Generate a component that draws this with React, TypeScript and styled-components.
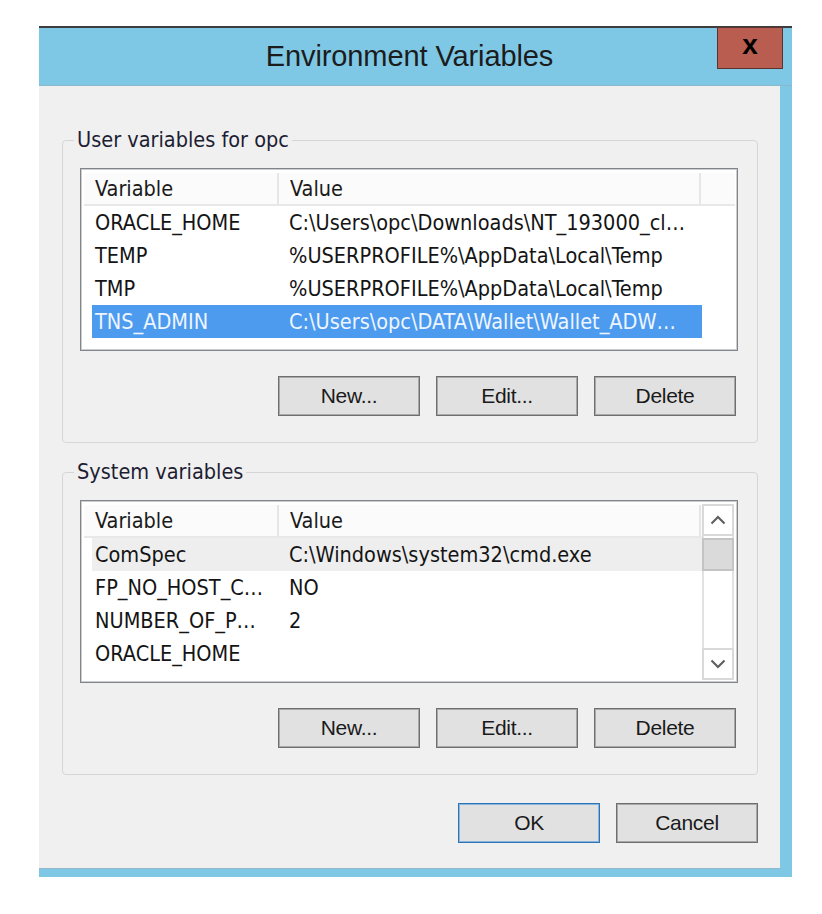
import React from "react";
import styled, { createGlobalStyle } from "styled-components";

const listFont = `"DejaVu Sans Condensed", "Liberation Sans", sans-serif`;
const uiFont = `"Liberation Sans", Arial, sans-serif`;

const Global = createGlobalStyle`
  html, body { margin: 0; padding: 0; background: #ffffff; }
  body { width: 822px; height: 914px; overflow: hidden; }
  * { box-sizing: border-box; }
`;

const Page = styled.div`
  padding: 26px 0 0 39px;
`;

const Window = styled.div`
  width: 753px;
  background: #7ec8e6;
  border-top: 2px solid #3d3d3d;
`;

const TitleBar = styled.div`
  position: relative;
  height: 58px;
  border-bottom: 1px solid #8cb8cc;
  display: flex;
  align-items: center;
  padding-right: 12px;
`;

const Title = styled.div`
  flex: 1;
  text-align: center;
  font-family: ${uiFont};
  font-size: 29px;
  color: #1c1c1c;
  letter-spacing: -0.1px;
`;

const CloseButton = styled.div`
  position: absolute;
  top: -1px;
  right: 9px;
  width: 66px;
  height: 42px;
  background: #b95d51;
  border: 1px solid #5a3530;
  display: flex;
  align-items: center;
  justify-content: center;
  font-family: ${uiFont};
  font-weight: bold;
  font-size: 28px;
  line-height: 1;
  color: #000;
  padding-bottom: 6px;
`;

const Frame = styled.div`
  padding: 0 12px 8px 0;
`;

const Body = styled.div`
  height: 783px;
  background: #f0f0f0;
  border-bottom: 1px solid #93b8ca;
  padding: 42px 22px 25px 23px;
  display: flex;
  flex-direction: column;
`;

const GroupBox = styled.fieldset`
  margin: 0;
  min-width: 0;
  padding: 16px 19px 26px 17px;
  border: 1px solid #d6d6d6;
  border-radius: 4px;
  & + & {
    margin-top: 17px;
  }
`;

const Legend = styled.legend`
  font-family: ${listFont};
  font-size: 21.5px;
  line-height: 24px;
  color: #1d1d33;
  padding: 0 3px;
  margin-left: -6px;
`;

const ListBox = styled.div`
  height: 183px;
  background: #ffffff;
  border: 1px solid #80848c;
  box-shadow: inset 0 0 0 1px #cdcdcd;
  padding: 3px 2px 2px 3px;
  display: grid;
  grid-template-columns: 1fr auto;
  overflow: hidden;
`;

const ListContent = styled.div`
  min-width: 0;
  overflow: hidden;
`;

const Header = styled.div`
  display: grid;
  grid-template-columns: 195px 422px 1fr;
  height: 33px;
  margin-top: 1px;
  border-bottom: 2px solid #e8e8e8;
  background: #fbfbfb;
`;

const HeaderCell = styled.div<{ $last?: boolean }>`
  font-family: ${listFont};
  font-size: 21.5px;
  line-height: 32px;
  color: #1a1a1a;
  padding-left: ${(p) => (p.$last ? 0 : 11)}px;
  border-right: ${(p) => (p.$last ? "none" : "2px solid #e6e6e6")};
  white-space: nowrap;
  overflow: hidden;
`;

const Row = styled.div<{ $state?: "selected" | "hot" }>`
  display: grid;
  grid-template-columns: 194px 1fr;
  height: 33px;
  width: 610px;
  margin-left: 8px;
  background: ${(p) =>
    p.$state === "selected" ? "#4c9bef" : p.$state === "hot" ? "#eeeeee" : "transparent"};
  color: ${(p) => (p.$state === "selected" ? "#eef5ff" : "#141414")};
`;

const Cell = styled.div`
  font-family: ${listFont};
  font-size: 21.5px;
  line-height: 32px;
  padding: 1px 0 0 3px;
  white-space: nowrap;
  overflow: hidden;
`;

const ScrollBar = styled.div`
  width: 32px;
  margin: 0 1px 0 0;
  display: flex;
  flex-direction: column;
  background: #ffffff;
  border-left: 2px solid #e2e2e2;
  border-right: 2px solid #e2e2e2;
`;

const ScrollArrow = styled.div`
  height: 32px;
  display: flex;
  align-items: center;
  justify-content: center;
  border: 2px solid #d9d9d9;
  margin: 0 -2px;
  background: #ffffff;
`;

const ScrollThumb = styled.div`
  height: 33px;
  margin: 2px -2px 0;
  background: #dadada;
  border: 2px solid #c4c4c4;
`;

const ScrollTrack = styled.div`
  flex: 1;
`;

const ButtonRow = styled.div<{ $top: number }>`
  display: flex;
  justify-content: flex-end;
  gap: 16px;
  margin-top: ${(p) => p.$top}px;
  padding-right: 2px;
`;

const Button = styled.div<{ $default?: boolean }>`
  width: 142px;
  height: 40px;
  display: flex;
  align-items: center;
  justify-content: center;
  font-family: ${uiFont};
  font-size: 21px;
  color: #1a1a1a;
  background: #e1e1e1;
  border: 1px solid ${(p) => (p.$default ? "#2f74b4" : "#6e6e6e")};
  box-shadow: inset 0 0 0 1px ${(p) => (p.$default ? "#86b4dc" : "#a9a9a9")};
  letter-spacing: -0.3px;
`;

const DialogButtons = styled(ButtonRow)`
  padding-right: 0;
`;

const Chevron = ({ dir }: { dir: "up" | "down" }) => (
  <svg width="16" height="10" viewBox="0 0 16 10">
    <polyline
      points={dir === "up" ? "1.5,8.5 8,2 14.5,8.5" : "1.5,1.5 8,8 14.5,1.5"}
      fill="none"
      stroke="#606060"
      strokeWidth="2.2"
    />
  </svg>
);

type Item = { name: string; value: string; state?: "selected" | "hot" };

const userVars: Item[] = [
  { name: "ORACLE_HOME", value: "C:\\Users\\opc\\Downloads\\NT_193000_cl…" },
  { name: "TEMP", value: "%USERPROFILE%\\AppData\\Local\\Temp" },
  { name: "TMP", value: "%USERPROFILE%\\AppData\\Local\\Temp" },
  { name: "TNS_ADMIN", value: "C:\\Users\\opc\\DATA\\Wallet\\Wallet_ADW…", state: "selected" },
];

const systemVars: Item[] = [
  { name: "ComSpec", value: "C:\\Windows\\system32\\cmd.exe", state: "hot" },
  { name: "FP_NO_HOST_C…", value: "NO" },
  { name: "NUMBER_OF_P…", value: "2" },
  { name: "ORACLE_HOME", value: "" },
];

const VarList = ({ items, scroll }: { items: Item[]; scroll?: boolean }) => (
  <ListBox>
    <ListContent>
      <Header>
        <HeaderCell>Variable</HeaderCell>
        <HeaderCell>Value</HeaderCell>
        <HeaderCell $last />
      </Header>
      {items.map((it) => (
        <Row key={it.name} $state={it.state}>
          <Cell>{it.name}</Cell>
          <Cell>{it.value}</Cell>
        </Row>
      ))}
    </ListContent>
    {scroll && (
      <ScrollBar>
        <ScrollArrow>
          <Chevron dir="up" />
        </ScrollArrow>
        <ScrollThumb />
        <ScrollTrack />
        <ScrollArrow>
          <Chevron dir="down" />
        </ScrollArrow>
      </ScrollBar>
    )}
  </ListBox>
);

export default function App() {
  return (
    <>
      <Global />
      <Page>
        <Window>
          <TitleBar>
            <Title>Environment Variables</Title>
            <CloseButton>x</CloseButton>
          </TitleBar>
          <Frame>
            <Body>
              <GroupBox>
                <Legend>User variables for opc</Legend>
                <VarList items={userVars} />
                <ButtonRow $top={25}>
                  <Button>New...</Button>
                  <Button>Edit...</Button>
                  <Button>Delete</Button>
                </ButtonRow>
              </GroupBox>
              <GroupBox>
                <Legend>System variables</Legend>
                <VarList items={systemVars} scroll />
                <ButtonRow $top={25}>
                  <Button>New...</Button>
                  <Button>Edit...</Button>
                  <Button>Delete</Button>
                </ButtonRow>
              </GroupBox>
              <DialogButtons $top={28}>
                <Button $default>OK</Button>
                <Button>Cancel</Button>
              </DialogButtons>
            </Body>
          </Frame>
        </Window>
      </Page>
    </>
  );
}
